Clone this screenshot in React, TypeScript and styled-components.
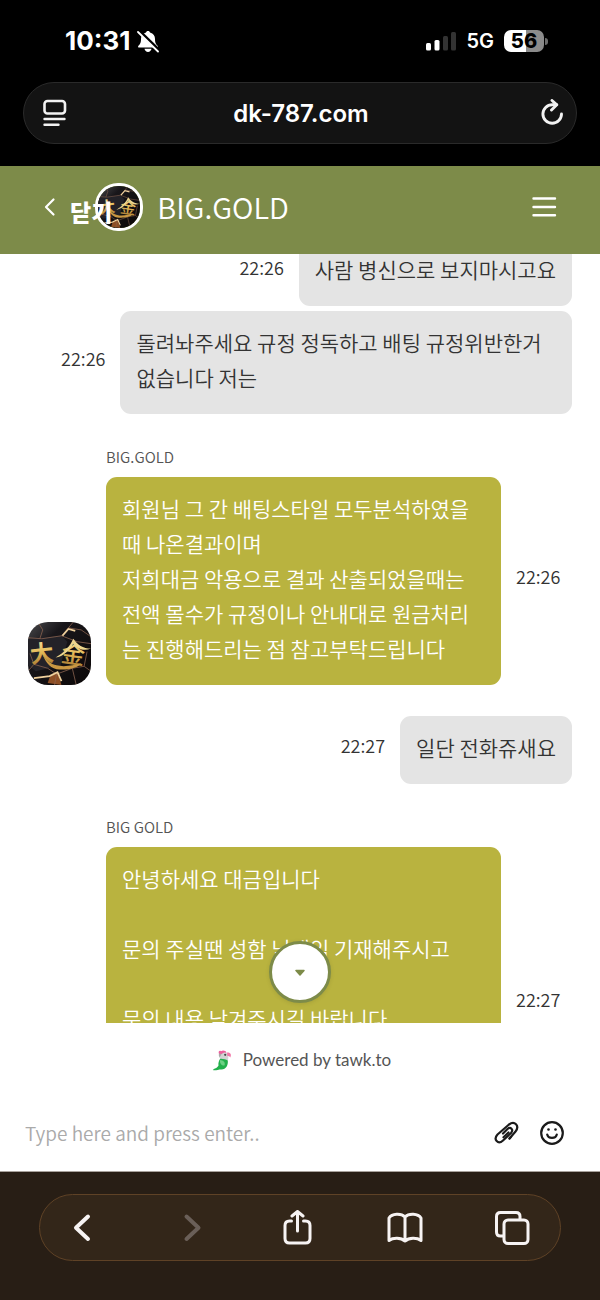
import React from 'react';
import styled, { createGlobalStyle } from 'styled-components';

const GlobalStyle = createGlobalStyle`
  * { box-sizing: border-box; }
  body { margin: 0; background: #fff; }
  button { border: 0; padding: 0; background: none; color: inherit; font: inherit; cursor: pointer; }
`;

const korean = `"Noto Sans CJK KR", sans-serif`;
const system = `Inter, sans-serif`;

const Screen = styled.div`
  display: flex;
  flex-direction: column;
  height: 100vh;
  overflow: hidden;
  background: #fff;
  font-family: ${korean};
`;

const BrowserTop = styled.header`
  flex: none;
  background: #000;
  color: #fff;
  padding: 0 23px 22px;
  font-family: ${system};
`;

const StatusBar = styled.div`
  display: flex;
  align-items: center;
  justify-content: space-between;
  height: 82px;
  padding: 0 29px 0 42px;
`;

const StatusGroup = styled.div<{ $gap: number }>`
  display: flex;
  align-items: center;
  gap: ${(p) => p.$gap}px;
`;

const Clock = styled.time`
  font-size: 26px;
  font-weight: 700;
  line-height: 30px;
`;

const Network = styled.span`
  font-size: 20px;
  font-weight: 600;
  line-height: 24px;
`;

const Battery = styled.div`
  display: flex;
  align-items: center;
  gap: 1px;
`;

const BatteryBody = styled.div`
  width: 40px;
  height: 22px;
  border-radius: 7px;
  background: linear-gradient(90deg, #fff 56%, #8b8b8b 56%);
  color: #000;
  font-size: 20px;
  font-weight: 800;
  line-height: 22px;
  text-align: center;
`;

const BatteryTip = styled.div`
  width: 3px;
  height: 7px;
  border-radius: 0 3px 3px 0;
  background: #6d6d6d;
`;

const AddressBar = styled.div`
  display: flex;
  align-items: center;
  justify-content: space-between;
  height: 62px;
  padding: 0 11px 0 18px;
  border: 1px solid #2a2a2a;
  border-radius: 31px;
  background: #131313;
`;

const Address = styled.span`
  margin-right: 5px;
  padding-top: 2px;
  font-size: 24px;
  font-weight: 600;
  line-height: 30px;
`;

const IconButton = styled.button`
  display: flex;
  align-items: center;
  justify-content: center;
  flex: none;
`;

const ChatHeader = styled.div`
  flex: none;
  display: flex;
  align-items: center;
  height: 88px;
  padding: 0 42px 6px 40px;
  background: #7d8b49;
  color: #fff;
`;

const CloseLabel = styled.button`
  position: relative;
  z-index: 1;
  margin: 8px -17px 0 10px;
  font-size: 23px;
  font-weight: 900;
  line-height: 28px;
`;

const HeaderAvatar = styled.div`
  flex: none;
  display: flex;
  width: 48px;
  height: 48px;
  border: 3px solid #fff;
  border-radius: 23px;
  overflow: hidden;
`;

const ChatTitle = styled.h1`
  flex: 1;
  margin: 0 0 2px 14px;
  font-size: 29px;
  font-weight: 350;
  line-height: 40px;
`;

const ChatArea = styled.main`
  position: relative;
  flex: 1;
  min-height: 0;
  overflow: hidden;
`;

const Messages = styled.div`
  display: flex;
  flex-direction: column;
  margin-top: -16px;
  padding: 0 28px;
`;

const MessageRow = styled.div<{ $own?: boolean; $gap: number }>`
  display: flex;
  align-items: center;
  justify-content: ${(p) => (p.$own ? 'flex-end' : 'flex-start')};
  gap: 15px;
  margin-top: ${(p) => p.$gap}px;
`;

const Bubble = styled.p<{ $own?: boolean; $long?: boolean }>`
  margin: 0;
  padding: 14px 16px 19px;
  min-height: ${(p) => (p.$long ? '313px' : '0')};
  max-width: 83%;
  flex: ${(p) => (p.$own ? '0 1 auto' : '1 1 0')};
  border-radius: 11px;
  background: ${(p) => (p.$own ? '#e4e4e4' : '#b9b33f')};
  color: ${(p) => (p.$own ? '#333' : '#fff')};
  font-size: 21px;
  font-weight: 350;
  line-height: 35px;
  white-space: pre-line;
`;

const MessageTime = styled.time`
  flex: none;
  padding-bottom: 10px;
  color: #333;
  font-size: 18px;
  font-weight: 350;
  line-height: 24px;
`;

const AgentTime = styled(MessageTime)`
  width: 56px;
`;

const AgentName = styled.div<{ $gap: number }>`
  margin: ${(p) => p.$gap}px 0 0 78px;
  color: #555;
  font-size: 15px;
  font-weight: 350;
  line-height: 24px;
`;

const AvatarSlot = styled.div`
  flex: none;
  align-self: flex-end;
  display: flex;
  width: 63px;
  height: 63px;
  border-radius: 20px;
  overflow: hidden;
`;

const AvatarSpace = styled.div`
  flex: none;
  width: 63px;
`;

const ScrollDown = styled.button`
  position: absolute;
  left: 50%;
  bottom: 20px;
  display: flex;
  align-items: center;
  justify-content: center;
  width: 62px;
  height: 62px;
  margin-left: -31px;
  border: 3px solid #7d8b49;
  border-radius: 50%;
  background: #fff;
  box-shadow: 0 1px 4px rgba(0, 0, 0, 0.1);
`;

const Powered = styled.a`
  flex: none;
  display: flex;
  align-items: center;
  justify-content: center;
  gap: 11px;
  height: 72px;
  padding: 2px 0 0 3px;
  color: #555;
  font-family: Lato, sans-serif;
  font-size: 17px;
  line-height: 24px;
  text-decoration: none;
`;

const Composer = styled.form`
  flex: none;
  display: flex;
  align-items: center;
  gap: 18px;
  height: 77px;
  padding: 0 34px 0 25px;
  border-bottom: 1px solid #a8a29c;
`;

const MessageInput = styled.input`
  flex: 1;
  min-width: 0;
  border: 0;
  padding: 0;
  outline: 0;
  color: #333;
  font-family: ${korean};
  font-size: 19px;
  font-weight: 350;
  line-height: 28px;
  &::placeholder { color: #aaa; opacity: 1; }
`;

const BrowserBottom = styled.footer`
  flex: none;
  height: 128px;
  padding: 22px 39px 0;
  background: #281e15;
`;

const Toolbar = styled.nav`
  display: flex;
  align-items: center;
  justify-content: space-between;
  height: 67px;
  padding: 0 30px 0 24px;
  border: 1px solid #5f4226;
  border-radius: 34px;
  background: #332619;
  color: #f7f3f3;
`;

function AvatarArt({ id }: { id: string }) {
  return (
    <svg width="100%" height="100%" viewBox="0 0 64 64" aria-hidden="true">
      <defs>
        <linearGradient id={`${id}-gold`} x1="0" y1="0" x2="0" y2="1">
          <stop offset="0" stopColor="#fbeeb0" />
          <stop offset="0.5" stopColor="#e3b957" />
          <stop offset="1" stopColor="#9a6a28" />
        </linearGradient>
        <linearGradient id={`${id}-stone`} x1="0" y1="0" x2="1" y2="1">
          <stop offset="0" stopColor="#4b4b4d" />
          <stop offset="0.3" stopColor="#18161a" />
          <stop offset="1" stopColor="#0b0707" />
        </linearGradient>
      </defs>
      <rect width="64" height="64" fill={`url(#${id}-stone)`} />
      <path d="M0 17L34 14L40 20L33 44L8 50L0 44Z" fill="#232228" />
      <path d="M20 62L22 56L30 51L34 64Z" fill="#8e4f25" />
      <g fill="none" stroke="#8b6450" strokeWidth="0.800">
        <path d="M0 16L14 17L34 14L41 6L46 0M41 6L54 8L64 15M34 14L50 20L64 22M10 0L15 8L12 17" />
        <path d="M2 32L6 43L0 50M6 43L20 47L29 53L45 47L57 45L64 50M29 53L27 64M45 47L49 64M57 45L60 30" />
      </g>
      <path d="M35 14L41 7L48 9M6 57L22 55L30 51L34 60" fill="none" stroke="#efd09d" strokeWidth="1.800" />
      <g fill={`url(#${id}-gold)`} fontFamily='"Noto Sans CJK SC", sans-serif'>
        <text x="2" y="41" fontSize="24" fontWeight="700" transform="rotate(-6 12 32)">大</text>
        <text x="34" y="42" fontSize="24" fontWeight="500" transform="rotate(8 46 32)">金</text>
      </g>
      <path d="M15 33C18 38 23 43 29 44C37 46 46 44 54 42C50 48 38 49 29 48C21 46 17 39 15 33Z" fill="#c99742" />
      <path d="M28 36C37 31 43 24 46 17C50 23 56 27 64 27C56 30 50 27 46 22C42 29 36 35 28 36Z" fill="#ecd58d" />
    </svg>
  );
}

const SilentBell = () => (
  <svg width="22" height="23" viewBox="0 0 22 23" aria-label="Silent">
    <path d="M11 1c-1.200 0-1.800.6-2 1.500C5.500 3.500 4 6 4 9c0 4-1 5-2.700 7-.5.8-.2 1.500.7 1.500h18c.9 0 1.200-.7.7-1.500-1.700-2-2.700-3-2.700-7 0-3-1.500-5.500-5-6.500C12.800 1.600 12.200 1 11 1z" fill="#fff" />
    <path d="M7.500 18.800h7c-.4 2-1.700 3.200-3.500 3.200S7.900 20.800 7.500 18.800z" fill="#fff" />
    <path d="M2.500 1.500L22 20.500" stroke="#000" strokeWidth="3.600" />
    <path d="M1 2L21 21.500" stroke="#fff" strokeWidth="1.800" strokeLinecap="round" />
  </svg>
);

const Signal = () => (
  <svg width="30" height="20" viewBox="0 0 30 20" aria-label="Signal">
    <rect x="0" y="12" width="5" height="7.500" rx="1.500" fill="#fff" />
    <rect x="8.500" y="9" width="5" height="10.500" rx="1.500" fill="#fff" />
    <rect x="17" y="5" width="5" height="14.500" rx="1.500" fill="#333" />
    <rect x="25" y="1" width="5" height="18.500" rx="1.500" fill="#333" />
  </svg>
);

export default function App() {
  return (
    <Screen>
      <GlobalStyle />
      <BrowserTop>
        <StatusBar>
          <StatusGroup $gap={7}>
            <Clock>10:31</Clock>
            <SilentBell />
          </StatusGroup>
          <StatusGroup $gap={10}>
            <Signal />
            <Network>5G</Network>
            <Battery>
              <BatteryBody>56</BatteryBody>
              <BatteryTip />
            </Battery>
          </StatusGroup>
        </StatusBar>
        <AddressBar>
          <IconButton type="button" aria-label="Page menu">
            <svg width="26" height="28" viewBox="0 0 26 28" fill="none" stroke="#f2f2f2" strokeWidth="2.600" strokeLinecap="round">
              <rect x="2.500" y="2" width="20.500" height="12.500" rx="3" />
              <path d="M2.500 20H22.500M2.500 25.800H16.500" strokeWidth="2.400" />
            </svg>
          </IconButton>
          <Address>dk-787.com</Address>
          <IconButton type="button" aria-label="Reload">
            <svg width="26" height="28" viewBox="0 0 26 28" fill="none" stroke="#f2f2f2" strokeWidth="2.900" strokeLinecap="round" strokeLinejoin="round">
              <path d="M22.500 15A9.300 9.300 0 1 1 13.200 5.700H17.500" />
              <path d="M13 1.500L17.800 5.800L12.500 11" />
            </svg>
          </IconButton>
        </AddressBar>
      </BrowserTop>

      <ChatHeader>
        <IconButton type="button" aria-label="Back">
          <svg width="20" height="20" viewBox="0 0 20 20" fill="none" stroke="#fff" strokeWidth="2.200" strokeLinecap="round" strokeLinejoin="round">
            <path d="M13.500 2.500L6 10L13.500 17.500" />
          </svg>
        </IconButton>
        <CloseLabel type="button">닫기</CloseLabel>
        <HeaderAvatar>
          <AvatarArt id="head" />
        </HeaderAvatar>
        <ChatTitle>BIG.GOLD</ChatTitle>
        <IconButton type="button" aria-label="Menu">
          <svg width="28" height="20" viewBox="0 0 28 20" stroke="#fff" strokeWidth="2.400" strokeLinecap="round">
            <path d="M3.500 1.500H25M3.500 10H25M3.500 18.200H25" />
          </svg>
        </IconButton>
      </ChatHeader>

      <ChatArea>
        <Messages>
          <MessageRow $own $gap={0}>
            <MessageTime>22:26</MessageTime>
            <Bubble $own>사람 병신으로 보지마시고요</Bubble>
          </MessageRow>
          <MessageRow $own $gap={5}>
            <MessageTime>22:26</MessageTime>
            <Bubble $own>돌려놔주세요 규정 정독하고 배팅 규정위반한거 없습니다 저는</Bubble>
          </MessageRow>
          <AgentName $gap={31}>BIG.GOLD</AgentName>
          <MessageRow $gap={8}>
            <AvatarSlot>
              <AvatarArt id="agent" />
            </AvatarSlot>
            <Bubble>
              {'회원님 그 간 배팅스타일 모두분석하였을\n때 나온결과이며\n저희대금 악용으로 결과 산출되었을때는\n전액 몰수가 규정이나 안내대로 원금처리\n는 진행해드리는 점 참고부탁드립니다'}
            </Bubble>
            <AgentTime>22:26</AgentTime>
          </MessageRow>
          <MessageRow $own $gap={31}>
            <MessageTime>22:27</MessageTime>
            <Bubble $own>일단 전화쥬새요</Bubble>
          </MessageRow>
          <AgentName $gap={31}>BIG GOLD</AgentName>
          <MessageRow $gap={8}>
            <AvatarSpace />
            <Bubble $long>
              {'안녕하세요 대금입니다\n\n문의 주실땐 성함 닉네임 기재해주시고\n\n문의 내용 남겨주시길 바랍니다'}
            </Bubble>
            <AgentTime>22:27</AgentTime>
          </MessageRow>
        </Messages>
        <ScrollDown type="button" aria-label="Scroll to latest">
          <svg width="12" height="8" viewBox="0 0 12 8">
            <path d="M2 2.500H10L6 7Z" fill="#7d8b49" stroke="#7d8b49" strokeWidth="1.500" strokeLinejoin="round" />
          </svg>
        </ScrollDown>
      </ChatArea>

      <Powered href="#">
        <svg width="20" height="21" viewBox="0 0 20 21" aria-hidden="true">
          <path d="M7 4C6 1.500 7.500.2 9 1.200C11 0 13.500 .6 14.500 2.500L11 5Z" fill="#ee5f9c" />
          <path d="M7 3.500L10 4L8 8C7 7 6.500 5 7 3.500Z" fill="#a8a8a8" />
          <path d="M9 5C10.500 1.500 15.500 1.500 16.200 5C16.700 8 16 9.500 15.500 12L8.500 11C7.500 9 8 7 9 5Z" fill="#d3d3d3" />
          <path d="M15 2.500C18 2.300 20 4 18.300 7.500C17.800 6.300 16.500 6 15.300 6Z" fill="#f277a8" />
          <circle cx="13.200" cy="4.800" r="1.100" fill="#444" />
          <path d="M8 9C10 8.500 14 9.500 15.700 10.500C16.500 15 14 19.500 9.500 19.500C6 19.500 3 20.800.8 20C2 18.500 5.500 18 6.500 15.500C6 13 7 10.500 8 9Z" fill="#22b04b" />
          <path d="M8 10C11.500 10.500 13.500 12 12.500 15.500C10 16 7.500 13.500 8 10Z" fill="#6bd183" />
        </svg>
        Powered by tawk.to
      </Powered>

      <Composer onSubmit={(e) => e.preventDefault()}>
        <MessageInput type="text" aria-label="Message" placeholder="Type here and press enter.." />
        <IconButton type="button" aria-label="Attach file">
          <svg width="28" height="28" viewBox="0 0 28 28" fill="none" stroke="#1b1b1b" strokeWidth="2.200" strokeLinecap="round" strokeLinejoin="round">
            <path d="M17.500 19.500L23.500 12.500C28 6.500 22.500 1.500 17 5.500L5.500 15.500C1 20.500 6 26 11 21.500L19 14C22 10.500 18.500 7.500 15.500 10L11 14.500" />
            <path d="M17.500 19.500L19 17.800M11.500 18.300L16.500 13.500" />
          </svg>
        </IconButton>
        <IconButton type="button" aria-label="Emoji">
          <svg width="28" height="28" viewBox="0 0 28 28" fill="none" stroke="#1b1b1b" strokeWidth="2.200" strokeLinecap="round">
            <circle cx="14" cy="14" r="10.800" />
            <path d="M9.200 15.500C10.200 20 17.800 20 18.800 15.500" />
            <circle cx="10.500" cy="10.500" r="1.300" fill="#1b1b1b" stroke="none" />
            <circle cx="17.500" cy="10.500" r="1.300" fill="#1b1b1b" stroke="none" />
          </svg>
        </IconButton>
      </Composer>

      <BrowserBottom>
        <Toolbar>
          <IconButton type="button" aria-label="Back">
            <svg width="36" height="36" viewBox="0 0 36 36" fill="none" stroke="currentColor" strokeWidth="4" strokeLinecap="round" strokeLinejoin="round">
              <path d="M24 6.500L12 17.800L24 29" />
            </svg>
          </IconButton>
          <IconButton type="button" aria-label="Forward">
            <svg width="36" height="36" viewBox="0 0 36 36" fill="none" stroke="#6a5f58" strokeWidth="4" strokeLinecap="round" strokeLinejoin="round">
              <path d="M14.500 6.500L26.500 17.800L14.500 29" />
            </svg>
          </IconButton>
          <IconButton type="button" aria-label="Share">
            <svg width="36" height="36" viewBox="0 0 36 36" fill="none" stroke="currentColor" strokeWidth="3" strokeLinecap="round" strokeLinejoin="round">
              <path d="M12.500 11H10.500Q6 11 6 15.500V28.500Q6 33 10.500 33H26.500Q31 33 31 28.500V15.500Q31 11 26.500 11H24.500" />
              <path d="M18.500 21V2M13 6L18.500 1.500L24 6" />
            </svg>
          </IconButton>
          <IconButton type="button" aria-label="Bookmarks">
            <svg width="36" height="36" viewBox="0 0 36 36" fill="none" stroke="currentColor" strokeWidth="3" strokeLinecap="round" strokeLinejoin="round">
              <path d="M18 7C14 3 5 3.500 2 8V30.500C6 27.500 14 27.500 18 31C22 27.500 30 27.500 34 30.500V8C31 3.500 22 3 18 7ZM18 7V31" />
            </svg>
          </IconButton>
          <IconButton type="button" aria-label="Tabs">
            <svg width="36" height="36" viewBox="0 0 36 36" fill="none" stroke="currentColor" strokeWidth="3" strokeLinejoin="round">
              <path d="M10 26H6.500Q2.500 26 2.500 22V6.500Q2.500 2.500 6.500 2.500H22Q26 2.500 26 6.500V10" />
              <rect x="10" y="10" width="24" height="23.500" rx="4" />
            </svg>
          </IconButton>
        </Toolbar>
      </BrowserBottom>
    </Screen>
  );
}
